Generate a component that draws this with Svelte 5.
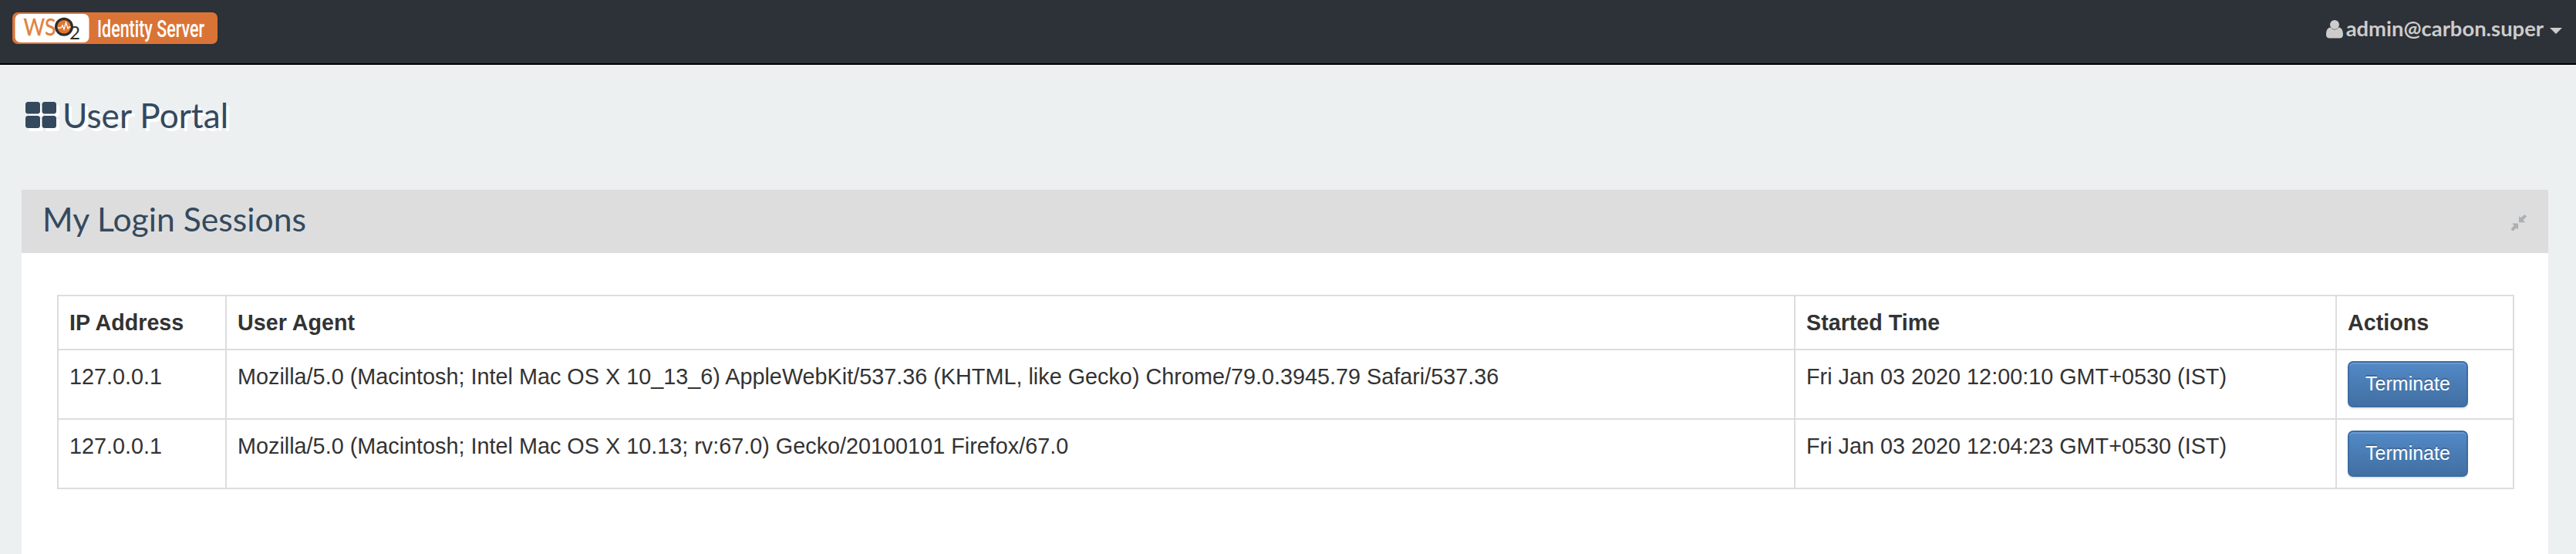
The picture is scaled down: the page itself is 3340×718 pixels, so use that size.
<script>
  const sessions = [
    {
      ip: '127.0.0.1',
      agent: 'Mozilla/5.0 (Macintosh; Intel Mac OS X 10_13_6) AppleWebKit/537.36 (KHTML, like Gecko) Chrome/79.0.3945.79 Safari/537.36',
      started: 'Fri Jan 03 2020 12:00:10 GMT+0530 (IST)'
    },
    {
      ip: '127.0.0.1',
      agent: 'Mozilla/5.0 (Macintosh; Intel Mac OS X 10.13; rv:67.0) Gecko/20100101 Firefox/67.0',
      started: 'Fri Jan 03 2020 12:04:23 GMT+0530 (IST)'
    }
  ];
</script>

<header class="navbar">
  <svg class="logo" width="266" height="41" viewBox="0 0 266 41">
    <rect width="266" height="41" rx="7" fill="#da7436" />
    <rect x="3.5" y="2" width="96" height="37" rx="7" fill="#fff" />
    <text x="14.5" y="29.5" class="ws" textLength="42" lengthAdjust="spacingAndGlyphs">WS</text>
    <circle cx="67" cy="18.7" r="10.4" fill="#e0762f" stroke="#2d2d2d" stroke-width="3.2" />
    <path d="M59 20h4l2-3 2 5 2.500-9 2.500 8 1.500-2h2" fill="none" stroke="#fff" stroke-width="1.300" />
    <text x="74" y="35" class="two" textLength="14" lengthAdjust="spacingAndGlyphs">2</text>
    <text x="110" y="31.700" class="product" textLength="139" lengthAdjust="spacingAndGlyphs">Identity Server</text>
  </svg>
  <div class="account">
    <svg class="user" width="22" height="24" viewBox="0 0 22 24">
      <circle cx="11" cy="6" r="6" fill="#ccc" />
      <path d="M5.500 9.500C1.500 10 0 14 0 19c0 3 2 4.500 4.500 4.500h13c2.500 0 4.500-1.500 4.500-4.500 0-5-1.500-9-5.500-9.500-3.500 4-7.500 4-11 0z" fill="#ccc" />
    </svg>
    <span class="name">admin@carbon.super</span>
    <span class="caret"></span>
  </div>
</header>

<h1 class="title">
  <svg width="40" height="34" viewBox="0 0 40 34">
    <rect width="19" height="15.500" rx="3.500" />
    <rect x="21.500" width="18.500" height="15.500" rx="3.500" />
    <rect y="18" width="19" height="16" rx="3.500" />
    <rect x="21.500" y="18" width="18.500" height="16" rx="3.500" />
  </svg>
  <span>User Portal</span>
</h1>

<section class="panel">
  <div class="panel-head">
    <h2>My Login Sessions</h2>
    <svg width="24" height="24" viewBox="0 0 24 24">
      <path d="M11 12.500v8l-2.500-2-4.500 4-2.500-2.500 4-4.500-2-3z" />
      <path d="M12 11.200v-8l2.500 2 5-4.200L22 3.500l-4.500 4.500 2.500 3.200z" />
    </svg>
  </div>
  <div class="panel-body">
    <table>
      <colgroup><col class="c1" /><col class="c2" /><col class="c3" /><col class="c4" /></colgroup>
      <thead>
        <tr><th>IP Address</th><th>User Agent</th><th>Started Time</th><th>Actions</th></tr>
      </thead>
      <tbody>
        {#each sessions as s}
          <tr>
            <td>{s.ip}</td>
            <td>{s.agent}</td>
            <td>{s.started}</td>
            <td><button>Terminate</button></td>
          </tr>
        {/each}
      </tbody>
    </table>
  </div>
</section>

<style>
  :global(body) {
    background: #ecf0f1;
    overflow: hidden;
    font: 28.8px/40px "Liberation Sans", Arial, sans-serif;
    color: #333;
  }
  .navbar {
    box-sizing: border-box;
    height: 84px;
    padding: 16px 18px 0 16px;
    display: flex;
    justify-content: space-between;
    align-items: flex-start;
    background: #2d3138;
    border-bottom: 2px solid #000;
  }
  .logo, .user { display: block; overflow: visible; }
  .ws { font: 400 30px Lato, sans-serif; fill: #e0823f; stroke: #e0823f; stroke-width: 0.4; }
  .two { font: 400 24px Lato, sans-serif; fill: #2d2d2d; }
  .product { font: 500 31px Roboto, sans-serif; fill: #fff; }
  .account {
    display: flex;
    align-items: center;
    height: 44px;
    color: #ccc;
    font: 700 27.4px/42px Lato, sans-serif;
  }
  .name { margin: -1px 8px 1px 4px; }
  .caret {
    border: 8px solid transparent;
    border-top-color: #ccc;
    border-bottom: 0;
    margin-top: 4px;
  }
  .title {
    margin: 0;
    height: 162px;
    box-sizing: border-box;
    padding: 35px 0 0 33px;
    display: flex;
    align-items: flex-start;
    gap: 8px;
    font: 400 44.2px/60px Lato, sans-serif;
    color: #34495e;
    text-shadow: 4px 4px 0 #fff;
  }
  .title svg {
    margin-top: 13px;
    fill: #34495e;
    filter: drop-shadow(4px 4px 0 #fff);
  }
  .panel {
    margin: 0 36px 0 28px;
    height: 472px;
    background: #fff;
  }
  .panel-head {
    height: 82px;
    box-sizing: border-box;
    padding: 0 26px 0 27px;
    display: flex;
    align-items: center;
    justify-content: space-between;
    background: #ddd;
  }
  .panel-head svg { margin-top: 4px; fill: #abb0b5; }
  h2 {
    margin: 0 0 7px;
    font: 400 42.7px/60px Lato, sans-serif;
    color: #34495e;
  }
  .panel-body { padding: 54px 44px 0 46px; }
  table {
    width: 3186px;
    table-layout: fixed;
    border-collapse: separate;
    border-spacing: 0;
    border: solid #ddd;
    border-width: 2px 0 0 2px;
  }
  .c1 { width: 218px; }
  .c2 { width: 2034px; }
  .c3 { width: 702px; }
  .c4 { width: 230px; }
  th, td {
    padding: 14px;
    text-align: left;
    vertical-align: top;
    border: solid #ddd;
    border-width: 0 2px 2px 0;
  }
  th { font-size: 28.7px; }
  button {
    display: block;
    box-sizing: border-box;
    width: 156px;
    height: 60px;
    padding: 0 0 2px;
    border: 2px solid #3b6ca3;
    border-radius: 7px;
    background: linear-gradient(#5289c6, #416fa2);
    box-shadow: inset 0 2px 0 rgba(255, 255, 255, 0.15), 0 2px 2px rgba(0, 0, 0, 0.1);
    color: #fff;
    font: 25px/36px "Liberation Sans", Arial, sans-serif;
    text-shadow: 0 -2px 0 rgba(0, 0, 0, 0.2);
  }
</style>
